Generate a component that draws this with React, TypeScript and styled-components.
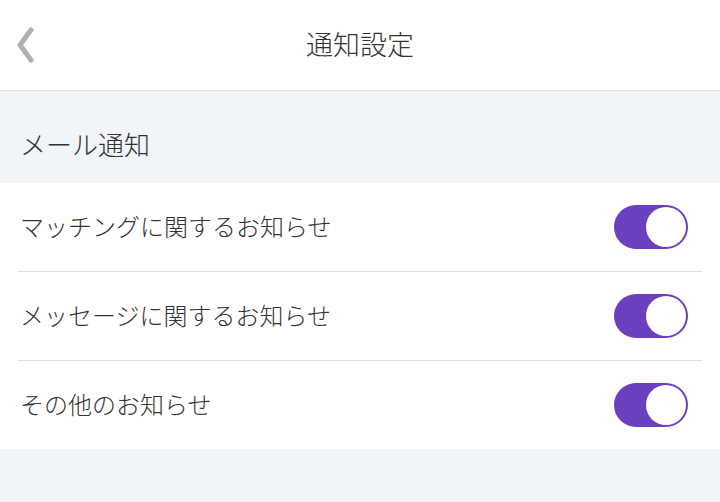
import React from "react"
import styled, { createGlobalStyle } from "styled-components"

const GlobalStyle = createGlobalStyle`
  html, body {
    margin: 0;
    padding: 0;
    background: #f1f4f8;
    font-family: "Noto Sans CJK JP", "Noto Sans", sans-serif;
  }
`

const Page = styled.div`
  width: 720px;
  height: 502px;
  background: #f1f4f8;
  overflow: hidden;
`

const Header = styled.header`
  height: 90px;
  background: #ffffff;
  border-bottom: 1px solid #dcdde2;
  display: grid;
  grid-template-columns: 80px 1fr 80px;
  align-items: center;
`

const BackButton = styled.div`
  display: flex;
  align-items: center;
  padding-left: 16px;
  height: 100%;
`

const Title = styled.h1`
  margin: 0 0 4px;
  text-align: center;
  font-size: 27px;
  font-weight: 300;
  color: #333333;
`

const SectionLabel = styled.div`
  height: 92px;
  box-sizing: border-box;
  padding: 12px 0 0 20px;
  display: flex;
  align-items: center;
  font-size: 26px;
  font-weight: 300;
  color: #333333;
`

const List = styled.div`
  background: #ffffff;
`

const Row = styled.div<{ $last?: boolean }>`
  height: 88px;
  margin-left: 18px;
  margin-right: 18px;
  display: flex;
  align-items: center;
  justify-content: space-between;
  border-bottom: ${(p) => (p.$last ? "none" : "1px solid #dedede")};
`

const RowText = styled.span`
  font-size: 24px;
  font-weight: 300;
  color: #333333;
  padding-left: 2px;
  margin-bottom: 3px;
`

const Track = styled.div`
  width: 74px;
  height: 44px;
  border-radius: 22px;
  background: #6a3fc0;
  display: flex;
  align-items: center;
  justify-content: flex-end;
  padding: 0 2px;
  box-sizing: border-box;
  margin-right: 14px;
`

const Knob = styled.div`
  width: 40px;
  height: 40px;
  border-radius: 50%;
  background: #ffffff;
`

const Chevron = () => (
  <svg width="22" height="40" viewBox="0 0 22 40">
    <path
      d="M15 5 L4 20 L15 35"
      fill="none"
      stroke="#b0b0b0"
      strokeWidth="5"
      strokeLinecap="round"
      strokeLinejoin="round"
    />
  </svg>
)

const items = ["マッチングに関するお知らせ", "メッセージに関するお知らせ", "その他のお知らせ"]

const App = () => {
  return (
    <Page>
      <GlobalStyle />
      <Header>
        <BackButton>
          <Chevron />
        </BackButton>
        <Title>通知設定</Title>
        <div />
      </Header>
      <SectionLabel>メール通知</SectionLabel>
      <List>
        {items.map((text, i) => (
          <Row key={text} $last={i === items.length - 1}>
            <RowText>{text}</RowText>
            <Track>
              <Knob />
            </Track>
          </Row>
        ))}
      </List>
    </Page>
  )
}

export default App
